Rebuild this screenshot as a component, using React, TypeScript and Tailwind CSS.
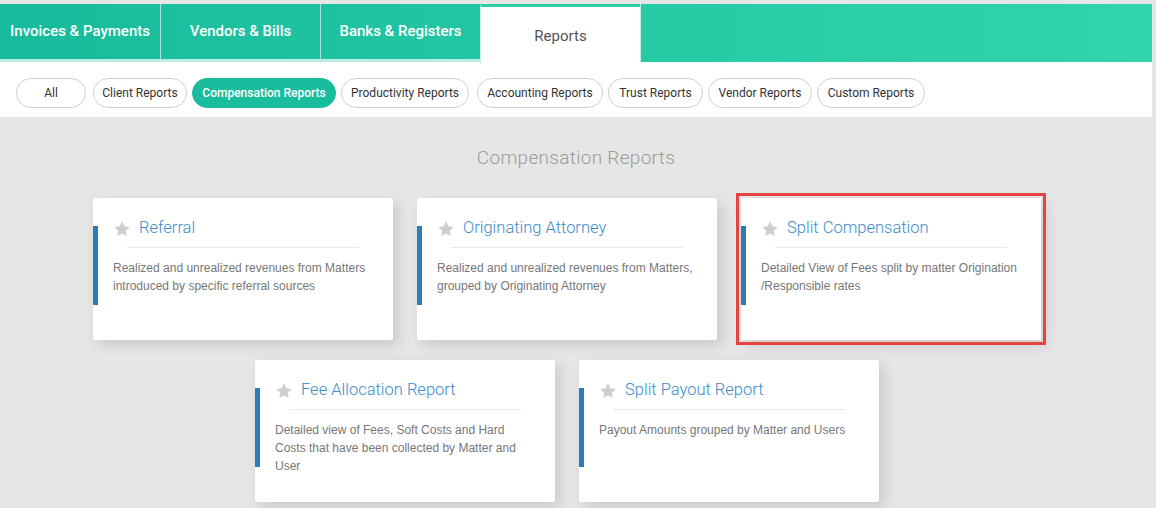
import React from "react";

const tabs = ["Invoices & Payments", "Vendors & Bills", "Banks & Registers"];

const filters = [
    { label: "All", w: "w-[70px]" },
    { label: "Client Reports", w: "w-[94px] ml-[2px]" },
    { label: "Compensation Reports", w: "w-[144px]" },
    { label: "Productivity Reports", w: "w-[128px]" },
    { label: "Accounting Reports", w: "w-[126px] ml-[3px]" },
    { label: "Trust Reports", w: "w-[95px]" },
    { label: "Vendor Reports", w: "w-[104px]" },
    { label: "Custom Reports", w: "w-[108px]" },
];

const reports = [
    { title: "Referral", text: "Realized and unrealized revenues from Matters introduced by specific referral sources" },
    { title: "Originating Attorney", text: "Realized and unrealized revenues from Matters, grouped by Originating Attorney" },
    { title: "Split Compensation", text: "Detailed View of Fees split by matter Origination /Responsible rates", selected: true },
    { title: "Fee Allocation Report", text: "Detailed view of Fees, Soft Costs and Hard Costs that have been collected by Matter and User" },
    { title: "Split Payout Report", text: "Payout Amounts grouped by Matter and Users" },
];

function Star() {
    return (
        <svg viewBox="0 0 24 24" className="w-[18px] h-[18px] shrink-0 fill-[#cfcfcf]">
            <path d="M12 1.8l3.1 6.6 7.2.9-5.3 5 1.4 7.1L12 17.9l-6.4 3.5L7 14.3l-5.3-5 7.2-.9z" />
        </svg>
    );
}

function ReportCard({ title, text, selected }: { title: string; text: string; selected?: boolean }) {
    return (
        <div
            className={`relative w-[300px] h-[142px] mr-6 mb-5 bg-white shadow-[5px_5px_14px_rgba(0,0,0,0.13)] ${selected ? "rounded-none outline-[3px] outline-solid outline-[#e4463f] outline-offset-2" : "rounded-[2px]"}`}
        >
            <div className="absolute left-0 top-[28px] w-[5px] h-[79px] bg-[#2b7db8]" />
            <div className="flex items-center gap-[8px] pl-5 pt-[21px] h-[40px]">
                <Star />
                <span className="text-[16.5px] font-light text-[#3c8bce] leading-none">{title}</span>
            </div>
            <div className="ml-[34px] w-[232px] h-px bg-[#e9e9e9] mt-[9px]" />
            <p className="px-5 pt-[11px] font-['Liberation_Sans',Arial,sans-serif] text-[12px] leading-[18px] text-[#777]">
                {text}
            </p>
        </div>
    );
}

export default function App() {
    return (
        <div className="min-h-screen bg-[#e6e6e6] pt-1 font-['Roboto',sans-serif]">
            <div className="mr-1">
                <div className="bg-white">
                    <div className="flex h-[58px] bg-gradient-to-r from-[#17bb9b] to-[#30d5ac]">
                        {tabs.map((t, i) => (
                            <div
                                key={t}
                                className={`w-[160px] flex items-center justify-center text-white text-[15px] font-medium border-b-[3px] border-b-[#bfece0] ${i > 0 ? "border-l border-l-[#a9e5d6]" : ""}`}
                            >
                                <span>{t}</span>
                            </div>
                        ))}
                        <div className="w-[160px] flex items-center justify-center bg-white border-t-[3px] border-t-[#2bd0a9] border-l border-l-[#c4efe3] text-[15px] text-[#555] h-[59px]">
                            <span className="mt-[2px]">Reports</span>
                        </div>
                        <div className="flex-1 border-l border-l-[#c4efe3]" />
                    </div>
                    <div className="flex items-center gap-[5px] pl-4 pt-[15px] pb-[9px] h-[55px]">
                        {filters.map((f, i) => (
                            <button
                                key={f.label}
                                type="button"
                                className={`h-[30px] rounded-full text-[12px] whitespace-nowrap ${f.w} ${i === 2
                                    ? "bg-[#19bd9e] text-white font-medium border border-[#19bd9e]"
                                    : "bg-white text-[#333] border border-[#cfcfcf]"
                                    }`}
                            >
                                {f.label}
                            </button>
                        ))}
                    </div>
                </div>

                <h2 className="text-center text-[19px] font-light text-[#9b9b9b] tracking-[0.3px] mt-[30px] mb-[29px] leading-[22px]">
                    Compensation Reports
                </h2>

                <div className="flex flex-wrap justify-center pl-[6px]">
                    {reports.map((r) => (
                        <ReportCard key={r.title} {...r} />
                    ))}
                </div>
            </div>
        </div>
    );
}
